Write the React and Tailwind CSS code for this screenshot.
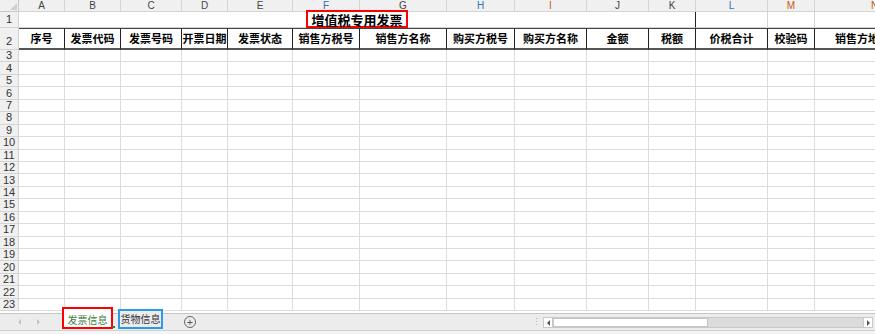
import React from "react";

const cols = ["A","B","C","D","E","F","G","H","I","J","K","L","M","N"];
const colColor = {
  F: "text-[#3b6ea5]", H: "text-[#2e75b6]", I: "text-[#c55a11]",
  L: "text-[#2e75b6]", M: "text-[#c55a11]", N: "text-[#c55a11]",
};
const headers = ["序号","发票代码","发票号码","开票日期","发票状态","销售方税号","销售方名称","购买方税号","购买方名称","金额","税额","价税合计","校验码","销售方地址"];
const gridCols = "grid-cols-[19px_46px_56px_61px_46px_65px_67px_87px_68px_72px_62px_47px_72px_47px_120px]";

export default function App() {
  const rows = Array.from({ length: 21 }, (_, i) => i + 3);
  const cjk = { fontFamily: '"Noto Sans CJK SC", "Noto Sans", sans-serif' };
  const num = { fontFamily: '"Liberation Sans", Arial, sans-serif' };
  return (
    <div className="relative w-[875px] h-[334px] overflow-hidden bg-white text-[#222]">
      <div className="h-[313px] overflow-hidden">
        <div className={`grid ${gridCols} w-[995px]`}>
          {/* column header */}
          <div className="h-[12px] bg-[#f0f0f0] border-r border-b border-[#c8c8c8] flex items-end justify-end pr-[1px] pb-[1px]">
            <div className="w-0 h-0 border-l-[7px] border-l-transparent border-b-[7px] border-b-[#cfcfcf]" />
          </div>
          {cols.map((c) => (
            <div key={c} style={num} className={`h-[12px] bg-[#f0f0f0] border-r border-b border-[#d4d4d4] flex items-center justify-center text-[10px] leading-none ${colColor[c] || "text-[#444]"}`}>{c}</div>
          ))}

          {/* row 1 */}
          <div style={num} className="h-[16px] bg-[#f0f0f0] border-r border-b border-[#d4d4d4] flex items-center justify-center text-[11px] leading-none text-[#333]">1</div>
          <div className="col-span-11 h-[16px] border-r border-r-[#222] border-b border-b-[#d4d4d4] flex items-center justify-center">
            <span style={cjk} className="relative z-10 border-2 border-[#ff0000] px-[3px] text-[13px] font-bold leading-[13px] h-[18px] -mt-[1px] flex items-center text-black">增值税专用发票</span>
          </div>
          <div className="h-[16px] border-r border-b border-[#d4d4d4]" />
          <div className="h-[16px] border-r border-b border-[#d4d4d4]" />
          <div className="h-[16px] border-r border-b border-[#d4d4d4]" />

          {/* row 2 */}
          <div style={num} className="h-[22px] bg-[#f0f0f0] border-r border-b border-[#d4d4d4] flex items-end justify-center text-[11px] leading-none pb-[2px] text-[#333]">2</div>
          {headers.map((h, i) => (
            <div key={i} style={cjk} className={`h-[22px] border-t border-t-[#444] border-b-2 border-b-[#555] border-r border-r-[#222] flex items-center text-[11px] font-bold leading-none text-black whitespace-nowrap overflow-hidden ${i === 13 ? "justify-start pl-[20px]" : "justify-center"}`}>{h}</div>
          ))}

          {/* data rows */}
          {rows.map((r) => (
            <React.Fragment key={r}>
              <div style={num} className="h-[12.45px] bg-[#f0f0f0] border-r border-b border-[#d4d4d4] flex items-center justify-center text-[11px] leading-none text-[#333]">{r}</div>
              {cols.map((c) => (
                <div key={c} className="h-[12.45px] border-r border-b border-[#dcdcdc]" />
              ))}
            </React.Fragment>
          ))}
        </div>
      </div>

      {/* tab bar */}
      <div className="h-[17px] bg-[#ececec] border-t border-[#c6c6c6] flex items-center relative">
        <div className="ml-[18px] w-0 h-0 border-y-[3px] border-y-transparent border-r-[3px] border-r-[#c4c4c4]" />
        <div className="ml-[16px] w-0 h-0 border-y-[3px] border-y-transparent border-l-[3px] border-l-[#c4c4c4]" />
        <div style={cjk} className="absolute left-[62px] bottom-[1px] w-[51px] h-[22px] border-2 border-[#ff0000] bg-white flex items-end justify-center pb-[2px] text-[10px] leading-none text-[#3c7a3c] whitespace-nowrap">
          发票信息
        </div>
        <div className="absolute left-[112px] bottom-[2px] w-[3px] h-[2px] bg-[#3c7a3c]" />
        <div style={cjk} className="absolute left-[118px] bottom-[1px] w-[45px] h-[20px] border-2 border-[#2b9be8] bg-[#ececec] flex items-center justify-center text-[10px] leading-none text-[#333] whitespace-nowrap">货物信息</div>
        <div className="absolute left-[184px] top-[2px] w-[12px] h-[12px] rounded-full border border-[#666] flex items-center justify-center text-[11px] leading-none text-[#555]">
          <span className="-mt-[1px]">+</span>
        </div>
        <span className="absolute left-[532px] top-[3px] text-[9px] leading-none text-[#aaa]">⋮</span>
        <div className="absolute left-[543px] top-[3px] w-[330px] h-[11px] bg-[#dbdbdb] border border-[#c8c8c8] flex items-center">
          <div className="w-[9px] h-full bg-white border-r border-[#c8c8c8] flex items-center justify-center">
            <div className="w-0 h-0 border-y-[3px] border-y-transparent border-r-[3px] border-r-[#555]" />
          </div>
          <div className="w-[155px] h-full bg-white border border-[#c4c4c4]" />
          <div className="flex-1" />
          <div className="w-[9px] h-full bg-white border-l border-[#c8c8c8] flex items-center justify-center">
            <div className="w-0 h-0 border-y-[3px] border-y-transparent border-l-[3px] border-l-[#555]" />
          </div>
        </div>
      </div>
      <div className="h-[4px] bg-[#f4f4f4] border-t border-[#d0d0d0]" />
    </div>
  );
}
